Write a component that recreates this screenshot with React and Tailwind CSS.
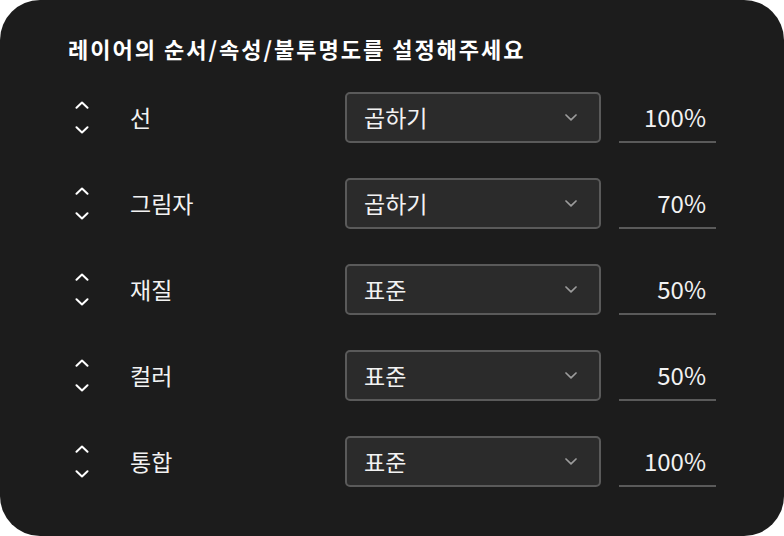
import React from 'react';

const rows = [
    { name: '선', mode: '곱하기', value: '100%' },
    { name: '그림자', mode: '곱하기', value: '70%' },
    { name: '재질', mode: '표준', value: '50%' },
    { name: '컬러', mode: '표준', value: '50%' },
    { name: '통합', mode: '표준', value: '100%' },
];

const font = { fontFamily: '"Noto Sans CJK KR", "Noto Sans", sans-serif' };

const Chevron = ({ up, className }) => (
    <svg width="14" height="8" viewBox="0 0 14 8" fill="none" className={className}>
        <path
            d={up ? 'M1.5 6.8 L7 1.5 L12.5 6.8' : 'M1.5 1.2 L7 6.5 L12.5 1.2'}
            stroke="currentColor"
            strokeWidth="2"
            strokeLinecap="round"
            strokeLinejoin="round"
        />
    </svg>
);

const LayerRow = ({ row }) => (
    <div className="flex items-center h-[51px]">
        {/* order buttons */}
        <div className="w-[62px] flex flex-col items-start pl-[7px] gap-[17px] text-white">
            <Chevron up />
            <Chevron />
        </div>
        <div className="flex-1 text-[23px] text-[#f2f2f2] leading-none">{row.name}</div>
        <div className="w-[256px] h-[51px] flex items-center justify-between rounded-[5px] border-2 border-[#5a5a5a] bg-[#2b2b2b] pl-[17px] pr-[22px]">
            <span className="text-[23px] text-[#f2f2f2] leading-none">{row.mode}</span>
            <svg width="12" height="7" viewBox="0 0 12 7" fill="none" className="text-[#9c9c9c]">
                <path d="M1 1 L6 5.8 L11 1" stroke="currentColor" strokeWidth="1.7" strokeLinecap="round" strokeLinejoin="round" />
            </svg>
        </div>
        <div className="ml-[18px] w-[97px] h-[51px] flex items-center justify-end border-b-2 border-[#5a5a5a] pr-[10px]">
            <span className="text-[24px] text-[#f2f2f2] leading-none">{row.value}</span>
        </div>
    </div>
);

export default function App() {
    return (
        <div className="w-[784px] h-[536px] bg-white" style={font}>
            <div className="w-full h-full bg-[#1c1c1c] rounded-[40px] px-[68px] pt-[34px]">
                <h1 className="text-[22px] leading-[28px] font-bold text-white tracking-[2px]">
                    레이어의 순서/속성/불투명도를 설정해주세요
                </h1>
                <div className="mt-[30px] flex flex-col gap-[35px]">
                    {rows.map(r => (
                        <LayerRow key={r.name} row={r} />
                    ))}
                </div>
            </div>
        </div>
    );
}
